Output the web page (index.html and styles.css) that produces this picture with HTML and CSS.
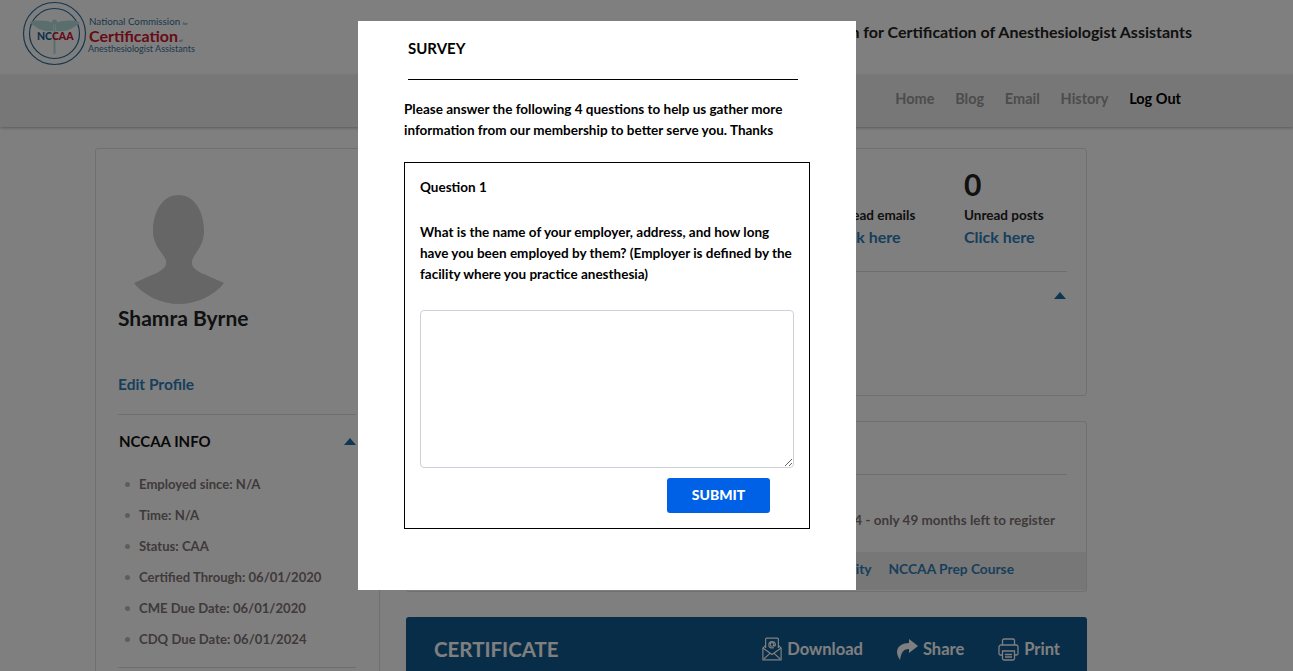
FILE: index.html
```html
<!DOCTYPE html>
<html lang="en">
  <head>
    <meta charset="UTF-8" />
    <meta name="viewport" content="width=device-width, initial-scale=1.0" />
    <title>NCCAA Dashboard</title>
    <link rel="stylesheet" href="styles.css">
  </head>
  <body>
    <header class="top">
      <svg class="logo" width="180" height="68" viewBox="0 0 180 68">
        <circle cx="32.5" cy="33.5" r="31" fill="none" stroke="#2a6d9c" stroke-width="1.2" />
        <circle cx="32.5" cy="33.5" r="25" fill="none" stroke="#2a6d9c" stroke-width="1.2" />
        <path d="M31 23 C24 20 15 20 8 22 C10 25 12 26 14 27 C18 30 24 32 31 31 Z M34 23 C41 20 50 20 58 22 C56 25 54 26 52 27 C48 30 42 32 34 31 Z" fill="#b5dcdc" />
        <path d="M32.5 22 L32.5 54" stroke="#b5dcdc" stroke-width="2" />
        <circle cx="32.5" cy="22" r="2.5" fill="#b5dcdc" />
        <text x="15" y="40" class="logo-nc">NC<tspan fill="#c8102e">CAA</tspan></text>
        <text x="67" y="25" class="logo-small">National Commission <tspan font-size="4">for</tspan></text>
        <text x="67" y="42" class="logo-cert">Certification<tspan font-size="4" font-weight="400" fill="#3a6f94"> of</tspan></text>
        <text x="66" y="52" class="logo-small logo-last">Anesthesiologist Assistants</text>
      </svg>
      <div class="site-title">National Commission for Certification of Anesthesiologist Assistants</div>
    </header>

    <nav class="menu">
      <a href="#">Home</a>
      <a href="#">Blog</a>
      <a href="#">Email</a>
      <a href="#">History</a>
      <a href="#" class="logout">Log Out</a>
    </nav>

    <div class="main">
      <aside class="card profile">
        <svg class="avatar" width="90" height="109" viewBox="0 0 90 109">
          <path d="M44.5 0 C60 0 70 16 70 36 C70 52 60 58 58 66 C57 72 62 76 72 80 L90 88 C80 101 62 109 45 109 C28 109 10 101 0 88 L18 80 C28 76 33 72 32 66 C30 58 19 52 19 36 C19 16 29 0 44.5 0 Z" fill="#ccc" />
        </svg>
        <h2 class="name">Shamra Byrne</h2>
        <a href="#" class="edit-link">Edit Profile</a>
        <div class="info-head">
          <span>NCCAA INFO</span>
          <i class="caret"></i>
        </div>
        <ul class="info-list">
          <li>Employed since: N/A</li>
          <li>Time: N/A</li>
          <li>Status: CAA</li>
          <li>Certified Through: 06/01/2020</li>
          <li>CME Due Date: 06/01/2020</li>
          <li>CDQ Due Date: 06/01/2024</li>
        </ul>
      </aside>

      <div class="content">
        <section class="card stats-card">
          <div class="stats">
            <div class="stat">
              <div class="stat-num">0</div>
              <div class="stat-label">Unread emails</div>
              <a href="#" class="stat-link">Click here</a>
            </div>
            <div class="stat">
              <div class="stat-num">0</div>
              <div class="stat-label">Unread posts</div>
              <a href="#" class="stat-link">Click here</a>
            </div>
          </div>
          <div class="stats-foot"><i class="caret"></i></div>
        </section>

        <section class="card exam-card">
          <div class="exam-head"></div>
          <p class="exam-text">Next CDQ exam registration closes 2024 - only 49 months left to register</p>
          <div class="exam-links">
            <a href="#">Activity</a>
            <a href="#">NCCAA Prep Course</a>
          </div>
        </section>

        <section class="cert-bar">
          <h3>CERTIFICATE</h3>
          <a href="#" class="cert-action">
            <svg width="20" height="24" viewBox="0 0 22 26" fill="none" stroke="#fff" stroke-width="1.3">
              <path d="M4 12 V2 C4 1.4 4.4 1 5 1 H17 C17.6 1 18 1.4 18 2 V12" />
              <path d="M4 9 L1 12 V25 H21 V12 L18 9" />
              <path d="M1 12 L11 19 L21 12" />
              <path d="M2 24 L9 17.5 M20 24 L13 17.5" />
              <circle cx="11" cy="8" r="2" />
              <path d="M13 8 V9.5 C14.5 10 15.2 8.5 14.6 7 C13.5 4 8 4.2 7.5 8 C7.3 11 10 12.5 13 11.5" />
            </svg>
            Download
          </a>
          <a href="#" class="cert-action">
            <svg width="21" height="21" viewBox="0 0 21 21" fill="#fff">
              <path d="M12 0 L21 7 L12 14 V10 C7 10 4 13 3 21 C1 18 0 15 0 13 C0 7 6 4 12 4 Z" />
            </svg>
            Share
          </a>
          <a href="#" class="cert-action">
            <svg width="21" height="23" viewBox="0 0 21 23" fill="none" stroke="#fff" stroke-width="1.3">
              <path d="M4.5 7 V2.5 C4.5 1.6 5.1 1 6 1 H15 C15.9 1 16.5 1.6 16.5 2.5 V7" />
              <path d="M4 17 H2.5 C1.6 17 1 16.4 1 15.5 V9 C1 7.9 1.9 7 3 7 H18 C19.1 7 20 7.9 20 9 V15.5 C20 16.4 19.4 17 18.5 17 H17" />
              <path d="M4.5 13 H16.5 V20.5 C16.5 21.4 15.9 22 15 22 H6 C5.1 22 4.5 21.4 4.5 20.5 Z" />
              <path d="M7 16.5 H14 M7 19 H14" />
            </svg>
            Print
          </a>
        </section>
      </div>
    </div>

    <div class="overlay">
      <div class="modal">
        <div class="modal-title">SURVEY</div>
        <p class="modal-intro">Please answer the following 4 questions to help us gather more information from our membership to better serve you. Thanks</p>
        <form class="question">
          <div class="q-num">Question 1</div>
          <p class="q-text">What is the name of your employer, address, and how long have you been employed by them? (Employer is defined by the facility where you practice anesthesia)</p>
          <textarea class="q-answer"></textarea>
          <div class="q-actions">
            <button type="button" class="submit">SUBMIT</button>
          </div>
        </form>
      </div>
    </div>
  </body>
</html>
```

FILE: styles.css
```css
html, body {
  height: 100%;
  overflow: hidden;
}
body {
  margin: 0;
  padding: 0;
  font-family: Lato, Arial, sans-serif;
  font-weight: 700;
  background-color: #fff;
  color: #222;
}
a {
  text-decoration: none;
  color: #2e7fb8;
}
.top {
  height: 75px;
  display: flex;
  justify-content: space-between;
  padding: 0 101px 0 22px;
  box-sizing: border-box;
}
.logo-nc {
  font-size: 10.5px;
  font-weight: 900;
  fill: #1f5f8f;
}
.logo-small {
  font-size: 9.8px;
  font-weight: 400;
  fill: #3a6f94;
}
.logo-last {
  font-size: 9px;
}
.logo-cert {
  font-size: 16px;
  font-weight: 700;
  fill: #d0142e;
}
.site-title {
  font-size: 16px;
  line-height: 20px;
  margin-top: 22px;
}
.menu {
  height: 52px;
  background: #eee;
  box-shadow: 0 1px 3px rgba(0, 0, 0, 0.3);
  display: flex;
  justify-content: flex-end;
  align-items: center;
  gap: 20.75px;
  box-sizing: border-box;
  padding: 0 112px 5px 0;
  font-size: 14.5px;
}
.menu a {
  color: #999;
}
.menu a.logout {
  color: #000;
}
.main {
  display: flex;
  gap: 26px;
  padding: 21px 0 0 95px;
}
.card {
  border: 1px solid #e0e0e0;
  border-radius: 3px;
  box-sizing: border-box;
}
.profile {
  width: 285px;
  flex: none;
  padding: 46px 23px 0 22px;
  height: 600px;
}
.avatar {
  display: block;
  margin-left: 16px;
}
.name {
  margin: 1px 0 0;
  font-size: 21px;
  line-height: 26px;
  font-weight: 700;
}
.edit-link {
  display: block;
  margin-top: 43px;
  font-size: 15.5px;
  line-height: 20px;
  padding-bottom: 20px;
  border-bottom: 1px solid #ddd;
}
.info-head {
  display: flex;
  justify-content: space-between;
  align-items: center;
  margin-top: 16px;
  padding-left: 1px;
  font-size: 15px;
  line-height: 20px;
  color: #111;
}
.caret {
  display: block;
  width: 0;
  height: 0;
  border-left: 6.5px solid transparent;
  border-right: 6.5px solid transparent;
  border-bottom: 7px solid #1c6ea4;
}
.info-list {
  list-style: none;
  margin: 18px 0 0;
  padding: 0 0 12px;
  border-bottom: 1px solid #ddd;
  font-size: 13.1px;
  color: #7f7575;
}
.info-list li {
  line-height: 31px;
  padding-left: 21px;
  position: relative;
}
.info-list li::before {
  content: "";
  position: absolute;
  left: 7px;
  top: 13px;
  width: 5px;
  height: 5px;
  border-radius: 50%;
  background: #bbb;
}
.content {
  width: 681px;
  flex: none;
}
.stats-card {
  height: 248px;
  padding: 0 19px 0 20px;
}
.stats {
  display: flex;
  justify-content: flex-end;
  height: 123px;
  border-bottom: 1px solid #ddd;
  padding-top: 17px;
  box-sizing: border-box;
}
.stat {
  width: 134px;
}
.stat:last-child {
  width: 103px;
}
.stat-num {
  font-size: 30px;
  line-height: 36px;
}
.stat-label {
  font-size: 13.5px;
  line-height: 20px;
  margin-top: 3px;
}
.stat-link {
  display: block;
  font-size: 16px;
  line-height: 24px;
}
.stats-foot {
  display: flex;
  justify-content: flex-end;
  padding: 20px 1px 0 0;
}
.exam-card {
  height: 171px;
  margin-top: 25px;
}
.exam-head {
  height: 52px;
  margin: 0 19px 0 20px;
  border-bottom: 1px solid #ddd;
}
.exam-text {
  margin: 35px 31px 0 0;
  font-size: 13.5px;
  line-height: 20px;
  text-align: right;
  color: #7f7575;
}
.exam-links {
  margin-top: 22px;
  height: 38px;
  background: #eee;
  display: flex;
  justify-content: flex-end;
  align-items: center;
  gap: 17px;
  box-sizing: border-box;
  padding: 0 72px 5px 0;
  font-size: 13.75px;
}
.cert-bar {
  margin-top: 25px;
  height: 80px;
  background: #105a90;
  border-radius: 3px;
  display: flex;
  align-items: flex-start;
  padding: 19px 27px 0 28px;
}
.cert-bar h3 {
  margin: -1px auto 0 0;
  font-size: 20.5px;
  line-height: 28px;
  color: #fff;
  font-weight: 700;
}
.cert-action {
  display: flex;
  align-items: center;
  gap: 5px;
  margin-left: 34px;
  margin-top: -1px;
  color: #fff;
  font-size: 16.5px;
  line-height: 28px;
}
.overlay {
  position: fixed;
  left: 0;
  top: 0;
  right: 0;
  bottom: 0;
  background: rgba(0, 0, 0, 0.5);
}
.modal {
  position: absolute;
  left: 358px;
  top: 21px;
  width: 498px;
  height: 569px;
  background: #fff;
  color: #000;
  box-sizing: border-box;
  padding: 0 46px;
  font-size: 13.5px;
  line-height: 21px;
}
.modal-title {
  margin: 0 12px 0 4px;
  padding: 17px 0 20px;
  font-size: 15px;
  border-bottom: 1px solid #000;
}
.modal-intro {
  margin: 19px 0 0;
}
.question {
  margin-top: 21px;
  border: 1px solid #000;
  width: 406px;
  height: 367px;
  box-sizing: border-box;
  padding: 14px 15px 0;
}
.q-text {
  margin: 24px 0 0;
}
.q-answer {
  display: block;
  width: 374px;
  height: 158px;
  box-sizing: border-box;
  margin-top: 25px;
  border: 1px solid #ccd2da;
  border-radius: 4px;
  background: #fff;
}
.q-actions {
  display: flex;
  justify-content: flex-end;
  padding: 10px 24px 0 0;
}
.submit {
  width: 103px;
  height: 35px;
  padding-bottom: 4px;
  background: #0060e6;
  color: #fff;
  border: none;
  border-radius: 3px;
  font-family: Lato, Arial, sans-serif;
  font-weight: 900;
  font-size: 14px;
  cursor: pointer;
}
```
